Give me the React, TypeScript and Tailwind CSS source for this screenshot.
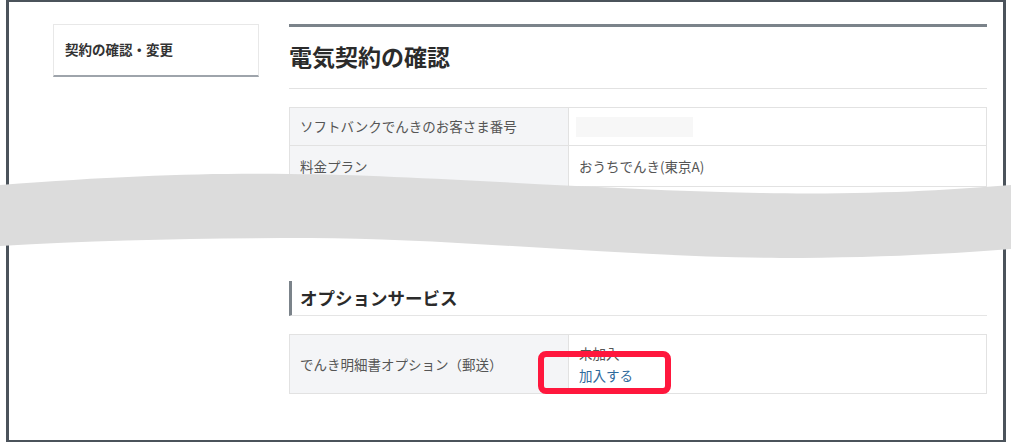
const font = { fontFamily: '"Noto Sans CJK JP", "Noto Sans", sans-serif' };

function Wave() {
  // torn-page style break across the middle of the screenshot
  return (
    <svg
      className="absolute left-0 top-0 pointer-events-none"
      width="1011"
      height="442"
      viewBox="0 0 1011 442"
      aria-hidden
    >
      <path
        d="M0,185 C120,176 200,173 290,174 C420,175 600,190 760,193 C870,195 950,190 1011,185 L1011,249 C950,254 870,258 780,258 C620,257 450,238 310,238 C200,238 100,240 0,246 Z"
        fill="#dcdcdc"
      />
    </svg>
  );
}

export default function App() {
  return (
    <div className="relative w-[1011px] h-[442px] overflow-hidden bg-white" style={font}>
      <div className="ml-[6px] w-[1000px] h-[442px] border-x-[3px] border-y-[2px] border-[#4b535b]">
        <div className="flex pl-[44px] pt-[22px] gap-[30px]">
          {/* side nav */}
          <div className="w-[206px] h-[53px] flex items-center px-[11px] pb-[2px] border border-[#e8e8e8] border-b-2 border-b-[#9ea4ab]">
            <span className="text-[13.5px] font-bold text-[#333]">契約の確認・変更</span>
          </div>

          {/* main */}
          <div className="w-[698px]">
            <div className="border-t-[3px] border-[#7b838a]">
              <div className="h-[62px] flex items-center pb-[2px] border-b border-[#e2e2e2]">
                <h1 className="text-[23px] font-bold text-[#2b2b2b] leading-none">電気契約の確認</h1>
              </div>
            </div>

            <div className="mt-[18px] border border-[#e2e2e2] text-[13.5px] text-[#555]">
              <div className="flex h-[38px] border-b border-[#e2e2e2]">
                <div className="w-[279px] bg-[#f4f5f7] flex items-center px-[10px] border-r border-[#e2e2e2]">
                  ソフトバンクでんきのお客さま番号
                </div>
                <div className="flex-1 flex items-center px-[7px]">
                  <div className="w-[117px] h-[20px] bg-[#f7f7f7]" />
                </div>
              </div>
              <div className="flex h-[40px]">
                <div className="w-[279px] bg-[#f4f5f7] flex items-center px-[10px] border-r border-[#e2e2e2]">
                  料金プラン
                </div>
                <div className="flex-1 flex items-center px-[10px]">おうちでんき(東京A)</div>
              </div>
            </div>

            <div className="mt-[94px] h-[35px] flex items-center pl-[8px] border-l-[3px] border-[#7b838a] border-b border-b-[#e5e5e5]">
              <h2 className="text-[17.5px] font-bold text-[#2b2b2b] leading-none">オプションサービス</h2>
            </div>

            <div className="relative mt-[18px] border border-[#e2e2e2] text-[13.5px] text-[#555]">
              <div className="flex h-[58px]">
                <div className="w-[279px] bg-[#f4f5f7] flex items-center px-[10px] border-r border-[#e2e2e2]">
                  でんき明細書オプション（郵送）
                </div>
                <div className="flex-1 flex flex-col justify-center px-[10px] leading-[22px]">
                  <span>未加入</span>
                  <a className="text-[#2f6a9c]">加入する</a>
                </div>
              </div>
              <div className="absolute left-[248px] top-[16px] w-[133px] h-[43px] border-[6px] border-[#ff173d] rounded-[8px]" />
            </div>
          </div>
        </div>
      </div>
      <Wave />
    </div>
  );
}
